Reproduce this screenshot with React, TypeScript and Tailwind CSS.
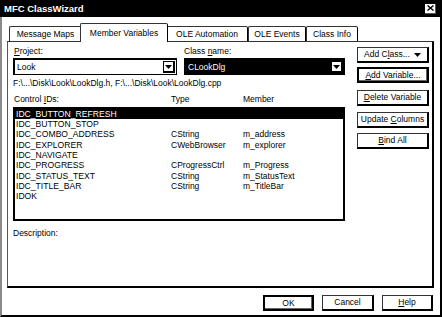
import React from "react";

const U = ({ c }: { c: string }) => (
  <span className="underline decoration-1 underline-offset-[1px]">{c}</span>
);

const Tri = ({ color = "black" }: { color?: string }) => (
  <svg width="7" height="4" viewBox="0 0 7 4">
    <path d="M0 0 L7 0 L3.5 4 Z" fill={color} />
  </svg>
);

const rows: [string, string, string][] = [
  ["IDC_BUTTON_REFRESH", "", ""],
  ["IDC_BUTTON_STOP", "", ""],
  ["IDC_COMBO_ADDRESS", "CString", "m_address"],
  ["IDC_EXPLORER", "CWebBrowser", "m_explorer"],
  ["IDC_NAVIGATE", "", ""],
  ["IDC_PROGRESS", "CProgressCtrl", "m_Progress"],
  ["IDC_STATUS_TEXT", "CString", "m_StatusText"],
  ["IDC_TITLE_BAR", "CString", "m_TitleBar"],
  ["IDOK", "", ""],
];

const btn =
  "h-[16px] bg-white border-t border-l border-[#333] border-r-2 border-b-2 border-r-black border-b-black flex items-center justify-center";
const btnDef =
  "h-[16px] bg-white border-2 border-black shadow-[inset_-1px_-1px_0_#666] flex items-center justify-center";

export default function App() {
  return (
    <div className="w-[442px] h-[317px] bg-white text-black font-['Liberation_Sans',Arial,sans-serif] text-[8.5px] leading-none overflow-hidden flex flex-col">
      {/* Title bar */}
      <div className="h-[17px] shrink-0 bg-black flex items-center justify-between pl-[4px] pr-[6px]">
        <span className="text-white font-bold text-[9.5px]">MFC ClassWizard</span>
        <div className="w-[11px] h-[10px] bg-white border-r border-b border-[#555] flex items-center justify-center">
          <svg width="7" height="6" viewBox="0 0 7 6">
            <path d="M0.5 0.5 L6.5 5.5 M6.5 0.5 L0.5 5.5" stroke="black" strokeWidth="1.4" />
          </svg>
        </div>
      </div>

      {/* Body */}
      <div className="flex-1 flex flex-col border-l-2 border-r-2 border-b-2 border-l-[#8a8a8a] border-r-black border-b-black pl-[5px] pr-[6px]">
        {/* Tabs */}
        <div className="h-[24px] shrink-0 flex items-end pl-[2px]">
          <div className="w-[73px] h-[15px] border-l border-t border-r border-[#333] border-r-black rounded-t-[2px] flex items-center justify-center">
            Message Maps
          </div>
          <div className="relative z-10 -mx-[2px] -mb-[1px] w-[88px] h-[19px] bg-white border-l border-t border-r border-[#333] border-r-black rounded-t-[2px] flex items-center justify-center pt-[1px]">
            Member Variables
          </div>
          <div className="w-[82px] h-[15px] border-l border-t border-r border-[#333] border-r-black rounded-t-[2px] flex items-center justify-center">
            OLE Automation
          </div>
          <div className="w-[58px] h-[15px] border-l border-t border-r border-[#333] border-r-black rounded-t-[2px] flex items-center justify-center">
            OLE Events
          </div>
          <div className="w-[52px] h-[15px] border-l border-t border-r border-[#333] border-r-black rounded-t-[2px] flex items-center justify-center">
            Class Info
          </div>
        </div>

        {/* Panel */}
        <div className="h-[247px] shrink-0 flex border-l border-t border-r-2 border-b-2 border-l-[#555] border-t-[#333] border-r-black border-b-black">
          {/* Left column */}
          <div className="ml-[5px] w-[332px] flex flex-col">
            <div className="pt-[4px] h-[14px] flex items-center">
              <span className="ml-[1px] w-[170px]">
                <U c="P" />roject:
              </span>
              <span>
                Class <U c="n" />ame:
              </span>
            </div>
            <div className="mt-[2px] flex gap-[7px]">
              <div className="w-[164px] h-[17px] border-2 border-black border-r border-b flex items-stretch">
                <div className="flex-1 flex items-center pl-[2px]">Look</div>
                <div className="w-[12px] m-[1px] border border-black border-r-2 border-b-2 flex items-center justify-center">
                  <Tri />
                </div>
              </div>
              <div className="w-[161px] h-[17px] border-2 border-black border-r border-b flex items-stretch bg-black">
                <div className="flex-1 flex items-center pl-[2px] text-white">CLookDlg</div>
                <div className="w-[12px] m-[1px] bg-white border border-black border-r-2 border-b-2 flex items-center justify-center">
                  <Tri />
                </div>
              </div>
            </div>
            <div className="mt-[3px] h-[10px] flex items-center">
              F:\...\Disk\Look\LookDlg.h, F:\...\Disk\Look\LookDlg.cpp
            </div>
            <div className="mt-[6px] h-[10px] flex items-center">
              <span className="ml-[1px] w-[157px]">
                Control <U c="I" />Ds:
              </span>
              <span className="w-[72px]">Type</span>
              <span>Member</span>
            </div>
            <div className="mt-[3px] h-[114px] border-2 border-black flex flex-col">
              {rows.map(([id, type, mem], i) => (
                <div
                  key={id}
                  className={
                    i === 0
                      ? "h-[10.3px] shrink-0 flex items-center bg-black text-white"
                      : "h-[10.3px] shrink-0 flex items-center"
                  }
                >
                  <span className="pl-[1px] w-[156px] text-[8.6px]">{id}</span>
                  <span className="w-[72px]">{type}</span>
                  <span>{mem}</span>
                </div>
              ))}
            </div>
            <div className="mt-[7px] h-[10px] flex items-center">Description:</div>
          </div>

          {/* Right column */}
          <div className="ml-[12px] w-[72px] pt-[5px] flex flex-col">
            <div className={btn + " !justify-between px-[6px]"}>
              <span>
                Add C<U c="l" />ass...
              </span>
              <Tri />
            </div>
            <div className={btnDef + " mt-[4px]"}>
              <span>
                <U c="A" />dd Variable...
              </span>
            </div>
            <div className={btn + " mt-[7px]"}>
              <span>
                <U c="D" />elete Variable
              </span>
            </div>
            <div className={btn + " mt-[6px]"}>
              <span>
                Update <U c="C" />olumns
              </span>
            </div>
            <div className={btn + " mt-[5px]"}>
              <span>
                <U c="B" />ind All
              </span>
            </div>
          </div>
        </div>

        {/* Bottom buttons */}
        <div className="mt-[7px] flex justify-end gap-[8px] pr-[1px]">
          <div className={btnDef + " w-[51px]"}>OK</div>
          <div className={btn + " w-[52px]"}>Cancel</div>
          <div className={btn + " w-[51px]"}>
            <span>
              <U c="H" />elp
            </span>
          </div>
        </div>
      </div>
    </div>
  );
}
